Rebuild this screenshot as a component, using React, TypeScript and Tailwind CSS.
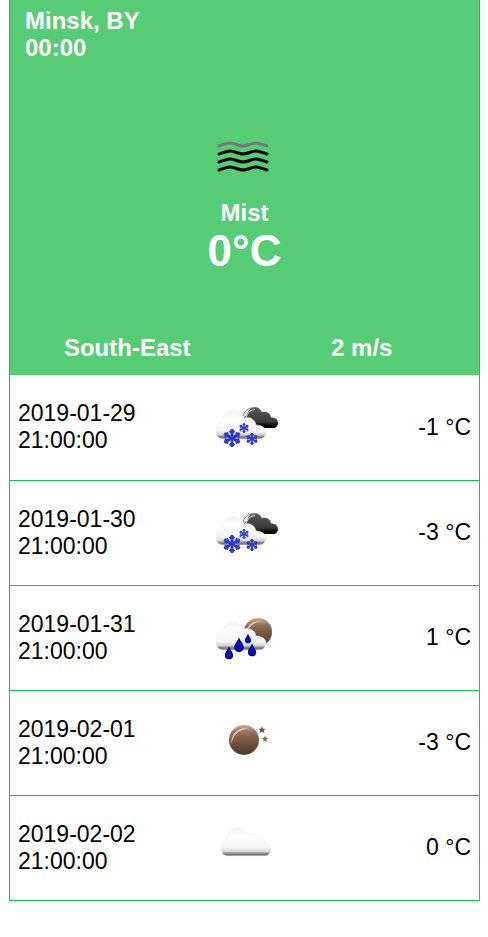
import type { ReactNode } from "react";

type Kind = "snow" | "rain" | "clear" | "cloud";

const CLOUD =
  "M7 28C3 28 0 25 0 20C0 15 2 11 6 11C7 4 11 0 17 0C22 0 25 3 27 7C33 5 39 8 40 14C46 14 50 17 50 21C50 25 47 28 44 28Z";

const STAR = "M0 -10L2.8 -3.6L9.5 -3.1L4.4 1.4L5.9 8.1L0 4.6L-5.9 8.1L-4.4 1.4L-9.5 -3.1L-2.8 -3.6Z";

function Defs() {
  return (
    <svg width="0" height="0" className="absolute" aria-hidden="true">
      <defs>
        <linearGradient id="white" x1="0" y1="0" x2="0" y2="1">
          <stop offset="0" stopColor="#f4f4f4" />
          <stop offset="0.3" stopColor="#fdfdfd" />
          <stop offset="0.7" stopColor="#f5f5f5" />
          <stop offset="0.84" stopColor="#d6d6d6" />
          <stop offset="0.93" stopColor="#747474" />
          <stop offset="1" stopColor="#8c8c8c" />
        </linearGradient>
        <linearGradient id="dark" x1="0" y1="0" x2="0" y2="1">
          <stop offset="0" stopColor="#5c5c5c" />
          <stop offset="0.7" stopColor="#3a3a3a" />
          <stop offset="0.85" stopColor="#0c0c0c" />
          <stop offset="1" stopColor="#000000" />
        </linearGradient>
        <linearGradient id="moon" x1="0" y1="0" x2="0" y2="1">
          <stop offset="0" stopColor="#cda88e" />
          <stop offset="0.25" stopColor="#94705a" />
          <stop offset="0.6" stopColor="#70503c" />
          <stop offset="1" stopColor="#523828" />
        </linearGradient>
        <radialGradient id="drop" cx="0.5" cy="0.6" r="0.5">
          <stop offset="0" stopColor="#0c14d8" />
          <stop offset="1" stopColor="#000078" />
        </radialGradient>
      </defs>
    </svg>
  );
}

function Flake({ x, y, r }: { x: number; y: number; r: number }) {
  return (
    <g transform={`translate(${x} ${y}) scale(${r / 9})`} stroke="#2f3cc6" strokeWidth="2.7" fill="none">
      {[0, 60, 120, 180, 240, 300].map((a) => (
        <path key={a} transform={`rotate(${a})`} d="M0 0V-9M-2.2 -7.4L0 -5L2.2 -7.4" />
      ))}
    </g>
  );
}

function Drop({ x, y, s }: { x: number; y: number; s: number }) {
  return (
    <path
      transform={`translate(${x} ${y}) scale(${s})`}
      d="M0 -1C1 3 5 6 5 10A5 5 0 0 1 -5 10C-5 6 -1 3 0 -1Z"
      fill="url(#drop)"
    />
  );
}

function Moon({ x, y, r }: { x: number; y: number; r: number }) {
  return (
    <g transform={`translate(${x} ${y}) scale(${r / 15})`}>
      <circle r="15" fill="url(#moon)" />
      <path d="M-12.5 4C-14 -6 -6 -13.5 5 -11.5C-4 -11 -10.5 -6 -12.5 4Z" fill="#efdccf" opacity="0.75" />
    </g>
  );
}

function Cloud({ x, y }: { x: number; y: number }) {
  return <path transform={`translate(${x} ${y})`} d={CLOUD} fill="url(#white)" stroke="#e8e8e8" strokeWidth="0.5" />;
}

function WeatherIcon({ kind }: { kind: Kind }) {
  let art: ReactNode;
  if (kind === "snow") {
    art = (
      <>
        <path transform="translate(27 4) scale(0.7 0.75)" d={CLOUD} fill="url(#dark)" />
        <path d="M27 13C29 7 34 4 40 5" fill="none" stroke="#8a8a8a" strokeWidth="1.2" />
        <path d="M30 15C31 10 34 7 39 6.5" fill="none" stroke="#d0d0d0" strokeWidth="1.2" />
        <Cloud x={0} y={8} />
        <Flake x={16} y={35} r={9} />
        <Flake x={28} y={25} r={5} />
        <Flake x={36} y={36} r={6} />
      </>
    );
  } else if (kind === "rain") {
    art = (
      <>
        <Moon x={42} y={18} r={14} />
        <Cloud x={0} y={8} />
        <Drop x={13} y={33} s={0.82} />
        <Drop x={23} y={24} s={0.95} />
        <Drop x={32} y={20} s={0.62} />
        <Drop x={36} y={30} s={0.82} />
      </>
    );
  } else if (kind === "clear") {
    art = (
      <>
        <Moon x={28} y={21} r={15} />
        <path transform="translate(46 11) scale(0.38)" d={STAR} fill="#75503d" />
        <path transform="translate(49 20) scale(0.33)" d={STAR} fill="#8a6450" />
      </>
    );
  } else {
    art = <Cloud x={5} y={4} />;
  }
  return (
    <svg viewBox="0 0 64 48" className="mx-auto block h-12 w-16" aria-hidden="true">
      {art}
    </svg>
  );
}

function MistIcon() {
  const wave = "M2 2C6 1 9 -1 13 -1C18 -1 21 2 26 2C31 2 34 -1 39 -1C43 -1 46 1 50 2";
  return (
    <svg viewBox="0 -3 56 34" className="h-[34px] w-14" fill="none" strokeWidth="3" strokeLinecap="round" aria-hidden="true">
      <path d={wave} stroke="#717a74" />
      <path transform="translate(0 8)" d={wave} stroke="#000000" />
      <path transform="translate(0 16)" d={wave} stroke="#000000" />
      <path transform="translate(0 24)" d={wave} stroke="#000000" />
    </svg>
  );
}

const days: { date: string; kind: Kind; temp: string }[] = [
  { date: "2019-01-29", kind: "snow", temp: "-1 °C" },
  { date: "2019-01-30", kind: "snow", temp: "-3 °C" },
  { date: "2019-01-31", kind: "rain", temp: "1 °C" },
  { date: "2019-02-01", kind: "clear", temp: "-3 °C" },
  { date: "2019-02-02", kind: "cloud", temp: "0 °C" },
];

export default function App() {
  return (
    <main className="mr-2 ml-[9px] border-x border-[#12c653] font-['Liberation_Sans',Arial,sans-serif] text-[24px] leading-[27px] text-black">
      <Defs />
      <section className="bg-[#57cc77] pt-[7px] pb-[14px] font-bold text-white">
        <header className="px-[15px]">
          <h1>Minsk, BY</h1>
          <p>00:00</p>
        </header>
        <div className="flex flex-col items-center pt-20 pb-[58px]">
          <MistIcon />
          <p className="pt-6">Mist</p>
          <p className="text-[44px] leading-[50px]">0°C</p>
        </div>
        <div className="grid grid-cols-2 text-center">
          <p>South-East</p>
          <p>2 m/s</p>
        </div>
      </section>
      <table className="w-full table-fixed border-collapse text-[23px]">
        <tbody>
          {days.map((day) => (
            <tr key={day.date} className="h-[105px] border-b border-[#12c653]">
              <th scope="row" className="pl-2 text-left font-normal">
                {day.date}
                <br />
                21:00:00
              </th>
              <td className="pl-2">
                <WeatherIcon kind={day.kind} />
              </td>
              <td className="pr-2 text-right">{day.temp}</td>
            </tr>
          ))}
        </tbody>
      </table>
    </main>
  );
}
